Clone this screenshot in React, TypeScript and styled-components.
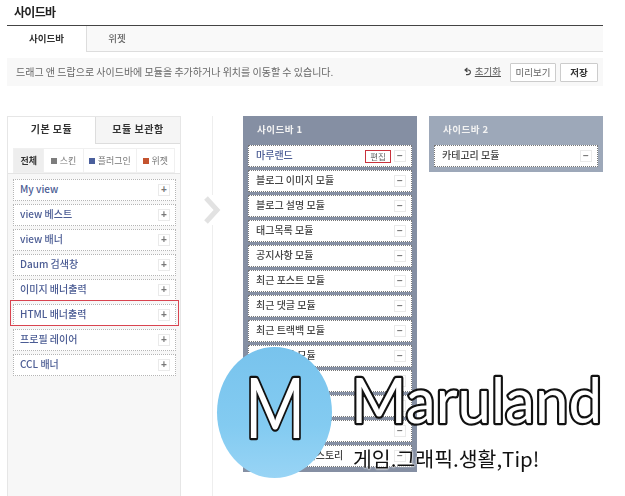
import styled, { createGlobalStyle } from 'styled-components';

const GlobalStyle = createGlobalStyle`
  html, body {
    margin: 0;
    padding: 0;
    background: #fff;
  }
  * {
    box-sizing: border-box;
  }
`;

const basicModules = ['My view', 'view 베스트', 'view 배너', 'Daum 검색창', '이미지 배너출력', 'HTML 배너출력', '프로필 레이어', 'CCL 배너'];

// 로고에 가려지는 줄은 라벨이 보이지 않아서 비워둠
const sidebarModules = [
  '블로그 이미지 모듈',
  '블로그 설명 모듈',
  '태그목록 모듈',
  '공지사항 모듈',
  '최근 포스트 모듈',
  '최근 댓글 모듈',
  '최근 트랙백 모듈',
  '글 보관함 모듈',
  '',
  '',
  '',
  '이 블로그의 티스토리',
];

const filters = [
  { label: '스킨', color: '#7d7d7d', width: 40 },
  { label: '플러그인', color: '#4a5f9c', width: 54 },
  { label: '위젯', color: '#c4532f', width: 38 },
];

export default function App() {
  return (
    <Page>
      <GlobalStyle />
      <PageTitle>사이드바</PageTitle>
      <TabBar>
        <TopTab $active>사이드바</TopTab>
        <TopTab>위젯</TopTab>
      </TabBar>
      <Notice>
        <NoticeText>드래그 앤 드랍으로 사이드바에 모듈을 추가하거나 위치를 이동할 수 있습니다.</NoticeText>
        <ResetLink>
          <svg width="7" height="9" viewBox="0 0 7 9" fill="none" stroke="#444" strokeWidth="1.1">
            <path d="M3.4 1 1 3l2.4 2M1 3h3.2c3 0 3 4.6-.4 4.6H2" />
          </svg>
          <span>초기화</span>
        </ResetLink>
        <ActionButton>미리보기</ActionButton>
        <ActionButton $primary>저장</ActionButton>
      </Notice>
      <Workspace>
        <ModulePanel>
          <PanelTabs>
            <PanelTab $active>기본 모듈</PanelTab>
            <PanelTab>모듈 보관함</PanelTab>
          </PanelTabs>
          <FilterWrap>
            <FilterBar>
              <FilterItem $active $width={31}>전체</FilterItem>
              {filters.map((f) => (
                <FilterItem key={f.label} $width={f.width}>
                  <FilterDot $color={f.color} />
                  {f.label}
                </FilterItem>
              ))}
            </FilterBar>
          </FilterWrap>
          <ModuleList>
            {basicModules.map((name) => (
              <ModuleRow key={name}>
                <ModuleName $blue>{name}</ModuleName>
                <RowButton>+</RowButton>
                {name.startsWith('HTML') && <MarkFrame />}
              </ModuleRow>
            ))}
          </ModuleList>
        </ModulePanel>
        <Gutter>
          <GutterLine $height={79} />
          <svg width="18" height="28" viewBox="0 0 18 28" fill="none" stroke="#e2e2e2" strokeWidth="5">
            <path d="M3 2l11 12L3 26" />
          </svg>
          <GutterLine />
        </Gutter>
        <SidebarColumn $tone="#858fa3">
          <SidebarTitle>사이드바 1</SidebarTitle>
          <SidebarRow>
            <ModuleName $blue>마루랜드</ModuleName>
            <EditButton>편집</EditButton>
            <RowButton>−</RowButton>
          </SidebarRow>
          {sidebarModules.map((name, i) => (
            <SidebarRow key={i}>
              <ModuleName>{name}</ModuleName>
              <RowButton>−</RowButton>
            </SidebarRow>
          ))}
        </SidebarColumn>
        <SidebarColumn $tone="#9da8b9" $gap>
          <SidebarTitle>사이드바 2</SidebarTitle>
          <SidebarRow>
            <ModuleName>카테고리 모듈</ModuleName>
            <RowButton>−</RowButton>
          </SidebarRow>
        </SidebarColumn>
      </Workspace>
      <LogoOverlay>
        <LogoCircle>
          <svg width="90" height="100" viewBox="0 0 90 100">
            <LogoLetters x="45" y="75" textAnchor="middle" fontSize="84" textLength="60" lengthAdjust="spacingAndGlyphs" strokeWidth="4.5">
              M
            </LogoLetters>
          </svg>
        </LogoCircle>
        <LogoText>
          <svg width="262" height="76" viewBox="0 0 262 76">
            <LogoLetters x="4" y="69" fontSize="62" textLength="251" lengthAdjust="spacingAndGlyphs" strokeWidth="4.5">
              Maruland
            </LogoLetters>
          </svg>
          <LogoTagline>게임.그래픽.생활,Tip!</LogoTagline>
        </LogoText>
      </LogoOverlay>
    </Page>
  );
}

const Page = styled.div`
  position: relative;
  width: 625px;
  height: 496px;
  padding: 0 22px 0 7px;
  overflow: hidden;
  font-family: 'Noto Sans CJK KR', 'Liberation Sans', sans-serif;
  color: #333;
  filter: blur(0.25px);
`;

const PageTitle = styled.h1`
  margin: 0;
  height: 25px;
  padding: 4px 0 0 7px;
  font-size: 12px;
  line-height: 16px;
  font-weight: 700;
  letter-spacing: -0.7px;
  color: #222;
`;

const TabBar = styled.div`
  display: flex;
  height: 27px;
  border-top: 1px solid #444;
  border-bottom: 1px solid #ddd;
  background: #f9f9f9;
`;

const TopTab = styled.div<{ $active?: boolean }>`
  width: ${({ $active }) => ($active ? '80px' : '60px')};
  height: 26px;
  text-align: center;
  font-size: 9.5px;
  line-height: 25px;
  font-weight: ${({ $active }) => ($active ? 700 : 500)};
  color: ${({ $active }) => ($active ? '#333' : '#666')};
  background: ${({ $active }) => ($active ? '#fff' : 'transparent')};
  border-right: ${({ $active }) => ($active ? '1px solid #ddd' : 'none')};
`;

const Notice = styled.div`
  display: flex;
  align-items: center;
  height: 28px;
  margin-top: 6px;
  padding: 0 5px 0 9px;
  background: #f8f8f8;
`;

const NoticeText = styled.p`
  flex: 1;
  margin: 0 0 2px;
  font-size: 10px;
  color: #666;
`;

const ResetLink = styled.a`
  display: flex;
  align-items: center;
  gap: 4px;
  margin: 0 9px 2px 0;
  font-size: 9.5px;
  color: #555;

  span {
    text-decoration: underline;
  }
`;

const ActionButton = styled.button<{ $primary?: boolean }>`
  width: ${({ $primary }) => ($primary ? '38px' : '46px')};
  height: 19px;
  margin-left: ${({ $primary }) => ($primary ? '4px' : '0')};
  padding: 0;
  border: 1px solid #ccc;
  border-radius: 1px;
  background: #fff;
  font-family: inherit;
  font-size: 9.5px;
  font-weight: ${({ $primary }) => ($primary ? 700 : 400)};
  color: ${({ $primary }) => ($primary ? '#333' : '#666')};
`;

const Workspace = styled.div`
  display: flex;
  align-items: flex-start;
  height: 380px;
  margin-top: 30px;
`;

const ModulePanel = styled.section`
  width: 174px;
  height: 380px;
  flex: none;
  background: #f7f7f7;
  border: 1px solid #e6e6e6;
  border-bottom: none;
`;

const PanelTabs = styled.div`
  display: flex;
  height: 27px;
`;

const PanelTab = styled.div<{ $active?: boolean }>`
  flex: ${({ $active }) => ($active ? '0 0 87px' : '1')};
  text-align: center;
  font-size: 10px;
  line-height: 24px;
  font-weight: 700;
  letter-spacing: 0.5px;
  color: #333;
  background: ${({ $active }) => ($active ? '#fff' : '#f5f5f5')};
  border-left: ${({ $active }) => ($active ? 'none' : '1px solid #ddd')};
  border-bottom: ${({ $active }) => ($active ? 'none' : '1px solid #ddd')};
`;

const FilterWrap = styled.div`
  height: 30px;
  padding: 4px 5px;
  background: #fff;
  border-bottom: 1px solid #e4e4e4;
`;

const FilterBar = styled.div`
  display: flex;
  height: 25px;
  border: 1px solid #f0f0f0;
`;

const FilterItem = styled.div<{ $active?: boolean; $width: number }>`
  display: flex;
  align-items: center;
  justify-content: center;
  gap: 3px;
  width: ${({ $width }) => $width}px;
  font-size: 9px;
  font-weight: ${({ $active }) => ($active ? 700 : 400)};
  color: ${({ $active }) => ($active ? '#333' : '#777')};
  background: ${({ $active }) => ($active ? '#eee' : '#fff')};
  border-right: 1px solid #f0f0f0;

  &:last-child {
    border-right: none;
  }
`;

const FilterDot = styled.i<{ $color: string }>`
  width: 6px;
  height: 6px;
  background: ${({ $color }) => $color};
`;

const ModuleList = styled.div`
  display: flex;
  flex-direction: column;
  gap: 3px;
  padding: 5px 4px 0 5px;
`;

const ModuleRow = styled.div`
  position: relative;
  display: flex;
  align-items: center;
  justify-content: space-between;
  height: 22px;
  padding: 0 5px 0 6px;
  background: #fff;
  border: 1px dotted #b5b5b5;
`;

const MarkFrame = styled.span`
  position: absolute;
  top: -5px;
  bottom: -1px;
  left: -4px;
  right: -4px;
  border: 1px solid #d9434f;
  pointer-events: none;
`;

const ModuleName = styled.span<{ $blue?: boolean }>`
  flex: 1;
  margin-bottom: 3px;
  font-size: 10px;
  font-weight: 500;
  white-space: nowrap;
  color: ${({ $blue }) => ($blue ? '#4b5c94' : '#444')};
`;

const RowButton = styled.span`
  display: flex;
  align-items: center;
  justify-content: center;
  width: 12px;
  height: 12px;
  flex: none;
  border: 1px solid #eaeaea;
  font-family: 'Liberation Sans', sans-serif;
  font-size: 10px;
  font-weight: 700;
  line-height: 1;
  color: #777;
  background: #fff;
`;

const Gutter = styled.div`
  display: flex;
  flex-direction: column;
  align-items: center;
  gap: 1px;
  width: 62px;
  height: 380px;
  flex: none;
`;

const GutterLine = styled.div<{ $height?: number }>`
  width: 1px;
  flex: ${({ $height }) => ($height ? `0 0 ${$height}px` : '1')};
  background: #eee;
`;

const SidebarColumn = styled.section<{ $tone: string; $gap?: boolean }>`
  display: flex;
  flex-direction: column;
  gap: 3px;
  width: 174px;
  flex: none;
  margin-left: ${({ $gap }) => ($gap ? '12px' : '0')};
  padding: 0 5px 5px;
  background: ${({ $tone }) => $tone};
`;

const SidebarTitle = styled.h2`
  height: 26px;
  margin: 0;
  padding-left: 9px;
  font-size: 9.5px;
  line-height: 27px;
  font-weight: 700;
  letter-spacing: 0.5px;
  color: #f2f2f2;
`;

const SidebarRow = styled.div`
  display: flex;
  align-items: center;
  height: 22px;
  padding: 0 5px 0 7px;
  background: #fff;
  border: 1px dotted #777;
`;

const EditButton = styled.span`
  width: 26px;
  height: 13px;
  margin-right: 3px;
  flex: none;
  border: 1px solid #c8323c;
  font-size: 8.5px;
  line-height: 10px;
  text-align: center;
  color: #666;
`;

const LogoOverlay = styled.div`
  position: absolute;
  left: 217px;
  top: 347px;
  display: flex;
  align-items: flex-start;
`;

const LogoCircle = styled.div`
  display: flex;
  align-items: center;
  justify-content: center;
  width: 115px;
  height: 131px;
  flex: none;
  border-radius: 50%;
  background: linear-gradient(180deg, #78c3ed 0%, #83cbf1 60%, #98d4f5 100%);
`;

const LogoLetters = styled.text`
  font-family: Lato, sans-serif;
  font-weight: 400;
  fill: #fff;
  stroke: #111;
  stroke-linejoin: round;
  paint-order: stroke fill;
`;

const LogoText = styled.div`
  display: flex;
  flex-direction: column;
  margin-left: 15px;
  padding-top: 7px;
`;

const LogoTagline = styled.div`
  margin-top: 15px;
  padding-left: 6px;
  font-family: 'Noto Sans CJK KR', sans-serif;
  font-size: 20.5px;
  line-height: 26px;
  font-weight: 400;
  color: #111;
  white-space: nowrap;
  text-shadow: 0 0 2px #fff, 0 0 2px #fff, 0 0 2px #fff;
`;
